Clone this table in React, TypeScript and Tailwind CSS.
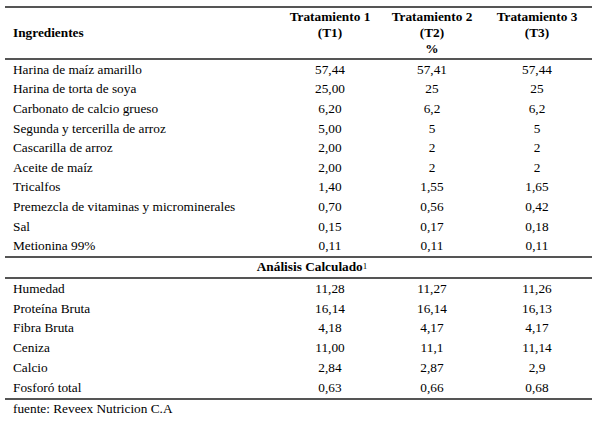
const ingredientes: [string, string, string, string][] = [
  ['Harina de maíz amarillo', '57,44', '57,41', '57,44'],
  ['Harina de torta de soya', '25,00', '25', '25'],
  ['Carbonato de calcio grueso', '6,20', '6,2', '6,2'],
  ['Segunda y tercerilla de arroz', '5,00', '5', '5'],
  ['Cascarilla de arroz', '2,00', '2', '2'],
  ['Aceite de maíz', '2,00', '2', '2'],
  ['Tricalfos', '1,40', '1,55', '1,65'],
  ['Premezcla de vitaminas y microminerales', '0,70', '0,56', '0,42'],
  ['Sal', '0,15', '0,17', '0,18'],
  ['Metionina 99%', '0,11', '0,11', '0,11'],
];

const analisis: [string, string, string, string][] = [
  ['Humedad', '11,28', '11,27', '11,26'],
  ['Proteína Bruta', '16,14', '16,14', '16,13'],
  ['Fibra Bruta', '4,18', '4,17', '4,17'],
  ['Ceniza', '11,00', '11,1', '11,14'],
  ['Calcio', '2,84', '2,87', '2,9'],
  ['Fosforó total', '0,63', '0,66', '0,68'],
];

const cols = 'grid grid-cols-[273px_102px_104px_108px]';

function Row({ cells, h }: { cells: [string, string, string, string]; h: string }) {
  return (
    <div className={`${cols} ${h} items-center`}>
      <div className="pl-[8px] whitespace-nowrap">{cells[0]}</div>
      <div className="text-center pl-[2px]">{cells[1]}</div>
      <div className="text-center">{cells[2]}</div>
      <div className="text-center pr-[2px]">{cells[3]}</div>
    </div>
  );
}

export default function App() {
  return (
    <div className="w-[600px] h-[421px] bg-white text-black text-[13.3px] leading-[16px] pl-[5px] pt-[6px] font-['Liberation_Serif',serif]">
      <div className="w-[587px]">
        <div className="h-[2px] bg-[#555]" />
        <div className={`${cols} h-[50px] font-bold items-center`}>
          <div className="pl-[8px]">Ingredientes</div>
          <div className="text-center pl-[2px] self-start pt-[1px]">
            <div>Tratamiento 1</div>
            <div>(T1)</div>
          </div>
          <div className="text-center self-start pt-[1px]">
            <div>Tratamiento 2</div>
            <div>(T2)</div>
            <div>%</div>
          </div>
          <div className="text-center self-start pt-[1px] pr-[2px]">
            <div>Tratamiento 3</div>
            <div>(T3)</div>
          </div>
        </div>
        <div className="h-[2px] bg-[#555]" />
        {ingredientes.map((r) => (
          <Row key={r[0]} cells={r} h="h-[19.6px]" />
        ))}
        <div className="h-[2px] bg-[#555]" />
        <div className="h-[19px] flex items-center justify-center pl-[27px] font-bold">
          <span>Análisis Calculado</span>
          <sup className="text-[9px] font-normal leading-none relative -top-[1px]">1</sup>
        </div>
        <div className="h-[2px] bg-[#555]" />
        {analisis.map((r) => (
          <Row key={r[0]} cells={r} h="h-[19.8px]" />
        ))}
        <div className="h-[2px] bg-[#555]" />
        <div className="h-[18px] flex items-center pl-[8px]">fuente: Reveex Nutricion C.A</div>
      </div>
    </div>
  );
}
